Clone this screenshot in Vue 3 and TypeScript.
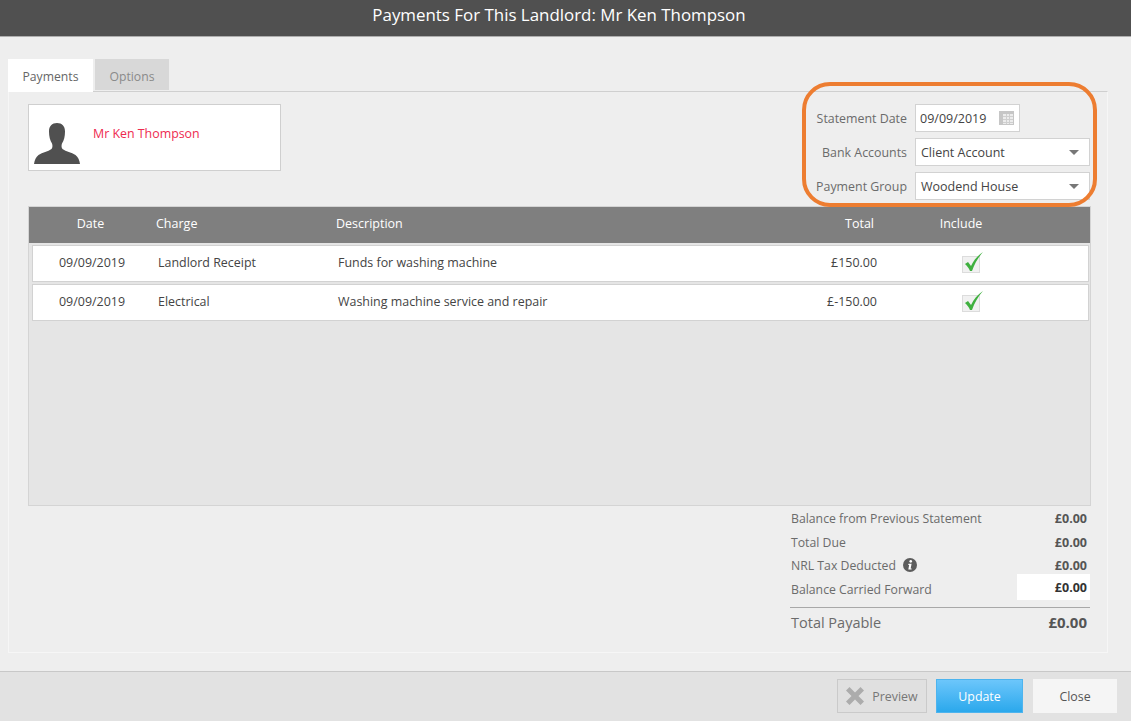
<script setup lang="ts">
interface Row { date: string; charge: string; description: string; total: string }
const rows: Row[] = [
  { date: '09/09/2019', charge: 'Landlord Receipt', description: 'Funds for washing machine', total: '£150.00' },
  { date: '09/09/2019', charge: 'Electrical', description: 'Washing machine service and repair', total: '£-150.00' },
]
</script>

<template>
  <div class="page">
    <header class="title">Payments For This Landlord: Mr Ken Thompson</header>
    <main class="body">
      <div class="tabs">
        <div class="tab active">Payments</div>
        <div class="tab">Options</div>
      </div>
      <section class="panel">
        <div class="top">
          <div class="card">
            <svg class="avatar" width="46" height="41" viewBox="0 0 46 41">
              <path fill="#505050" d="M23 0c-5 0-8 3-8 8.500 0 5 1 9 3 12 .8 2 .5 4.500-.5 5.500-3.500 2.500-9 3.500-13 6C2 34 .5 37 0 41h46c-.5-4-2-7-4.500-9-4-2.500-9.500-3.500-13-6-1-1-1.300-3.500-.5-5.500 2-3 3-7 3-12C31 3 28 0 23 0z"/>
            </svg>
            <span class="name">Mr Ken Thompson</span>
          </div>
          <div class="form">
            <div class="ring"></div>
            <div class="field">
              <label>Statement Date</label>
              <div class="input date">
                <span>09/09/2019</span>
                <svg width="15" height="14" viewBox="0 0 15 14">
                  <rect width="15" height="14" fill="#c6c6c6"/>
                  <rect x="4" y="3" width="10" height="10" fill="#ececec"/>
                  <path stroke="#cfcfcf" stroke-width="1" fill="none" d="M7.500 3v10M10.500 3v10M4 5.500h10M4 8.500h10M4 11.500h10"/>
                </svg>
              </div>
            </div>
            <div class="field">
              <label>Bank Accounts</label>
              <div class="input select"><span>Client Account</span><i class="caret"></i></div>
            </div>
            <div class="field">
              <label>Payment Group</label>
              <div class="input select"><span>Woodend House</span><i class="caret"></i></div>
            </div>
          </div>
        </div>

        <div class="table">
          <div class="thead">
            <span class="c-date">Date</span>
            <span>Charge</span>
            <span>Description</span>
            <span class="c-total">Total</span>
            <span class="c-inc">Include</span>
          </div>
          <div class="tbody">
            <div v-for="r in rows" :key="r.charge" class="row">
              <span class="c-date">{{ r.date }}</span>
              <span>{{ r.charge }}</span>
              <span>{{ r.description }}</span>
              <span class="c-total">{{ r.total }}</span>
              <span class="c-inc">
                <svg width="24" height="24" viewBox="0 0 24 24">
                  <rect x="1.500" y="5.500" width="17" height="16" fill="#f1f1f1" stroke="#dcdcdc"/>
                  <path fill="#3fb03f" d="M4 13l3-2 3 4C12.500 9.500 16.500 4.500 22 1 17 6.500 13.500 13 11 20H9C8 17 6 15 4 13z"/>
                </svg>
              </span>
            </div>
          </div>
        </div>

        <div class="summary">
          <div class="sum-row"><span>Balance from Previous Statement</span><b>£0.00</b></div>
          <div class="sum-row"><span>Total Due</span><b>£0.00</b></div>
          <div class="sum-row">
            <span class="with-info">NRL Tax Deducted
              <svg width="14" height="14" viewBox="0 0 15 15">
                <circle cx="7.500" cy="7.500" r="7.500" fill="#5c5c5c"/>
                <circle cx="8.300" cy="3.600" r="1.400" fill="#fff"/>
                <path fill="#fff" d="M5.800 6.200h3.400l-1 5h1v1.200H5.700l.9-5h-1z"/>
              </svg>
            </span>
            <b>£0.00</b>
          </div>
          <div class="sum-row carried"><span>Balance Carried Forward</span><b>£0.00</b></div>
          <div class="sum-total"><span>Total Payable</span><b>£0.00</b></div>
        </div>
      </section>
    </main>
    <footer class="foot">
      <button class="btn preview">
        <svg width="18" height="18" viewBox="0 0 18 18">
          <path fill="#acacac" d="M3.500 0L9 5.500 14.500 0 18 3.500 12.500 9 18 14.500 14.500 18 9 12.500 3.500 18 0 14.500 5.500 9 0 3.500z"/>
        </svg>
        Preview
      </button>
      <button class="btn update">Update</button>
      <button class="btn close">Close</button>
    </footer>
  </div>
</template>

<style>
html, body { margin: 0; background: #eeeeee; }
</style>

<style scoped>
.page {
  width: 100%;
  height: 721px;
  display: flex;
  flex-direction: column;
  background: #eeeeee;
  font-family: "Open Sans", "Noto Sans", sans-serif;
  font-size: 12px;
  color: #444;
  overflow: hidden;
}
.title {
  height: 36px;
  flex: none;
  box-sizing: content-box;
  border-bottom: 1px solid #aeaeae;
  background: #505050;
  color: #fff;
  font-size: 16.900px;
  line-height: 30px;
  text-align: center;
  padding-right: 13px;
}
.body {
  flex: none;
  height: 634px;
  padding: 22px 23px 0 8px;
  box-sizing: border-box;
}
.tabs { display: flex; height: 33px; gap: 2px; align-items: flex-start; }
.tab {
  width: 74px;
  height: 31px;
  background: #d8d8d8;
  color: #8a8a8a;
  font-size: 12.200px;
  line-height: 35px;
  text-align: center;
}
.tab.active { width: 85px; height: 33px; background: #fff; color: #666; position: relative; }
.panel {
  height: 562px;
  box-sizing: border-box;
  margin-top: -1px;
  border: 1px solid #f6f6f6;
  border-top: 1px solid #cfcfcf;
  padding: 12px 16px 0 19px;
}
.top { display: flex; justify-content: space-between; height: 102px; }
.card {
  width: 253px;
  height: 67px;
  box-sizing: border-box;
  background: #fff;
  border: 1px solid #cfcfcf;
  display: flex;
  align-items: flex-start;
  padding: 18px 0 0 5px;
}
.avatar { flex: none; }
.name { margin-left: 13px; margin-top: 2px; color: #ee2a50; font-size: 12.400px; line-height: 18px; }
.form { position: relative; width: 290px; display: flex; flex-direction: column; gap: 6px; }
.ring {
  position: absolute;
  left: 1px;
  top: -22px;
  width: 295px;
  height: 125px;
  box-sizing: border-box;
  border: 4px solid #ed7d31;
  border-radius: 28px;
  pointer-events: none;
}
.field { display: flex; align-items: center; height: 28px; }
label {
  width: 106px;
  flex: none;
  text-align: right;
  margin-right: 8px;
  color: #6b6b6b;
  font-size: 12.400px;
}
.input {
  height: 28px;
  box-sizing: border-box;
  background: #fff;
  border: 1px solid #d2d2d2;
  display: flex;
  align-items: center;
  justify-content: space-between;
  color: #444;
  font-size: 12.500px;
}
.date { width: 105px; padding: 0 5px 0 4px; }
.select { width: 175px; padding: 0 10px 0 5px; }
.caret { width: 0; height: 0; border: 5.500px solid transparent; border-top: 5px solid #777; border-bottom: 0; }
.table {
  width: 1063px;
  height: 300px;
  box-sizing: border-box;
  border: 1px solid #d4d4d4;
  background: #e5e5e5;
  display: flex;
  flex-direction: column;
}
.thead {
  height: 36px;
  flex: none;
  box-sizing: border-box;
  padding-bottom: 3px;
  display: grid;
  grid-template-columns: 127px 180px 448px 90px 1fr;
  align-items: center;
  background: #7f7f7f;
  color: #fff;
  font-size: 12.500px;
}
.c-date { text-align: center; }
.c-total { text-align: right; }
.thead .c-date { padding-right: 4px; }
.thead .c-inc { text-align: center; padding-right: 42px; }
.tbody { padding: 2px 1px 0 3px; display: flex; flex-direction: column; gap: 2px; }
.row {
  height: 37px;
  box-sizing: border-box;
  padding-bottom: 2px;
  display: grid;
  grid-template-columns: 125px 180px 449px 90px 1fr;
  align-items: center;
  background: #fff;
  border: 1px solid #d2d2d2;
  color: #444;
  font-size: 12.450px;
}
.row .c-date { padding-right: 7px; }
.row .c-inc { padding-right: 19px; }
.row .c-inc svg { display: block; margin: 1px auto 0; }
.summary { width: 300px; margin: 1px 1px 0 auto; color: #6b6b6b; font-size: 12.250px; }
.sum-row { display: flex; justify-content: space-between; align-items: center; height: 23.500px; padding: 0 3px 0 1px; }
.sum-row b { color: #555; font-weight: 700; font-size: 12.500px; }
.with-info { display: flex; align-items: center; gap: 7px; }
.with-info svg { margin-top: -2px; }
.sum-row.carried b {
  background: #fff;
  color: #333;
  width: 70px;
  height: 26px;
  line-height: 27px;
  text-align: right;
  padding-right: 3px;
  margin-right: -3px;
  margin-bottom: 4px;
}
.sum-total {
  margin-top: 6px;
  border-top: 1px solid #a8a8a8;
  display: flex;
  justify-content: space-between;
  align-items: center;
  height: 28px;
  padding: 0 3px 0 1px;
  font-size: 14.500px;
}
.sum-total b { color: #555; font-size: 15px; }
.foot {
  flex: 1;
  border-top: 1px solid #c8c8c8;
  background: #e2e2e2;
  display: flex;
  justify-content: flex-end;
  align-items: flex-start;
  padding: 7px 14px 0 0;
  box-sizing: border-box;
}
.btn {
  height: 34px;
  box-sizing: border-box;
  font-family: inherit;
  font-size: 12.400px;
  border: 1px solid transparent;
  padding: 0;
}
.preview {
  width: 90px;
  margin-right: 9px;
  background: #e0e0e0;
  border-color: #cacaca;
  color: #777;
  display: flex;
  align-items: center;
  justify-content: center;
  gap: 8px;
}
.update {
  width: 87px;
  margin-right: 10px;
  background: linear-gradient(#6cc6fb, #2ba8ec);
  border-color: #4db4ee;
  color: #fff;
}
.close { width: 84px; background: #f5f5f5; color: #555; }
</style>
